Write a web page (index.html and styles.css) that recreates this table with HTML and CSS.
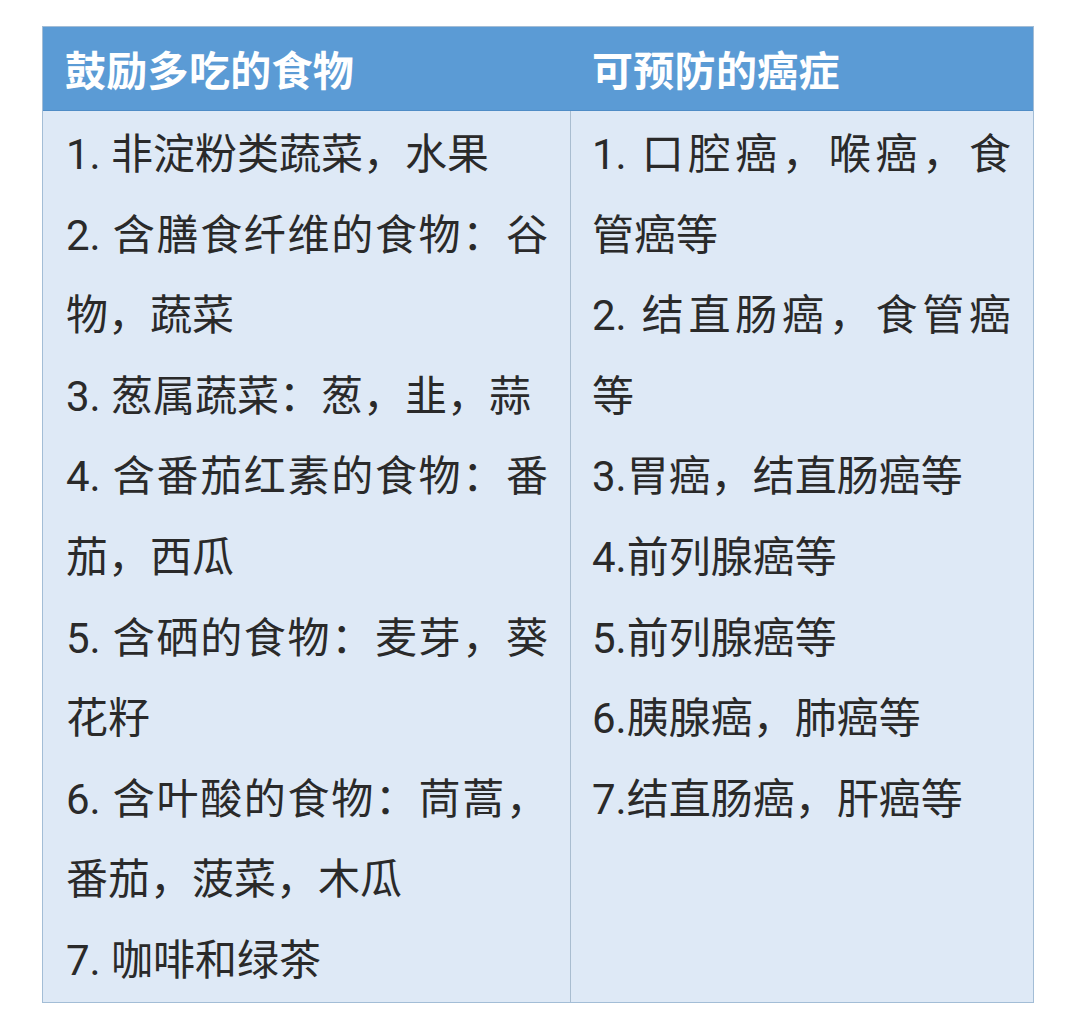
FILE: index.html
```html
<!DOCTYPE html>
<html lang="zh-CN">
<head>
<meta charset="utf-8">
<title>鼓励多吃的食物</title>
<link rel="stylesheet" href="styles.css">
</head>
<body>
<div class="page">
  <div class="table">
    <div class="head">鼓励多吃的食物</div>
    <div class="head head-right">可预防的癌症</div>
    <div class="cell cell-left">
      <p>1. 非淀粉类蔬菜，水果</p>
      <p>2. 含膳食纤维的食物：谷物，蔬菜</p>
      <p>3. 葱属蔬菜：葱，韭，蒜</p>
      <p>4. 含番茄红素的食物：番茄，西瓜</p>
      <p>5. 含硒的食物：麦芽，葵花籽</p>
      <p>6. 含叶酸的食物：茼蒿，番茄，菠菜，木瓜</p>
      <p>7. 咖啡和绿茶</p>
    </div>
    <div class="cell cell-right">
      <p>1. 口腔癌，喉癌，食管癌等</p>
      <p>2. 结直肠癌，食管癌等</p>
      <p>3.胃癌，结直肠癌等</p>
      <p>4.前列腺癌等</p>
      <p>5.前列腺癌等</p>
      <p>6.胰腺癌，肺癌等</p>
      <p>7.结直肠癌，肝癌等</p>
    </div>
  </div>
</div>
</body>
</html>
```

FILE: styles.css
```css
html, body {
  margin: 0;
  padding: 0;
  background: #ffffff;
}

.page {
  padding: 26px 0 0 42px;
}

.table {
  display: grid;
  grid-template-columns: 528px 462px;
  width: 990px;
  border: 1px solid #a3bdd6;
  background: #dee9f6;
  font-family: Roboto, "Noto Sans CJK SC", sans-serif;
  color: #2a2a2a;
}

.head {
  background: #5b9bd5;
  color: #ffffff;
  font-family: "Noto Sans CJK SC", sans-serif;
  font-weight: 700;
  font-size: 41px;
  height: 83px;
  line-height: 83px;
  padding-left: 22px;
  border-bottom: 1px solid #4f8cc6;
  letter-spacing: 0.3px;
}

.head-right {
  padding-left: 21px;
}

.cell {
  padding: 4px 22px 0 23px;
  font-size: 42px;
  line-height: 80.6px;
  text-align: justify;
}

.cell-left {
  border-right: 1px solid #a9bdd0;
}

.cell-right {
  padding-left: 21px;
}

.cell p {
  margin: 0;
}
```
